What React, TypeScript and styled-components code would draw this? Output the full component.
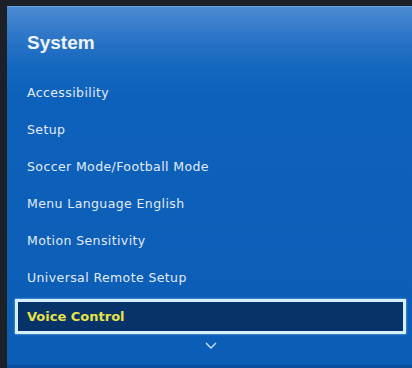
import React from 'react';
import styled, { createGlobalStyle } from 'styled-components';

const GlobalStyle = createGlobalStyle`
  html, body {
    margin: 0;
    padding: 0;
    background: #1c2127;
  }
  body {
    width: 412px;
    height: 368px;
    overflow: hidden;
  }
`;

const Frame = styled.div`
  width: 412px;
  height: 368px;
  padding: 6px 0 0 7px;
  box-sizing: border-box;
  background: #1c2127;
`;

const Panel = styled.div`
  display: flex;
  flex-direction: column;
  height: 362px;
  box-sizing: border-box;
  padding: 26px 6px 0 8px;
  border-top: 1px solid #6aa2dc;
  border-bottom: 3px solid #0a4f9c;
  background: linear-gradient(
    180deg,
    #4c8bd2 0px,
    #2f76c8 28px,
    #1568c0 58px,
    #0e61ba 90px,
    #0b5db6 100%
  );
`;

const Title = styled.h1`
  margin: -1px 0 20px;
  padding-left: 12px;
  height: 22px;
  line-height: 22px;
  font-family: 'Liberation Sans', Arial, sans-serif;
  font-size: 19px;
  font-weight: 700;
  color: #eef4fb;
`;

const List = styled.ul`
  list-style: none;
  margin: 0;
  padding: 0;
  display: flex;
  flex-direction: column;
`;

const Item = styled.li<{ $selected?: boolean }>`
  display: flex;
  align-items: center;
  box-sizing: border-box;
  height: ${(p) => (p.$selected ? '35px' : '37px')};
  margin-top: ${(p) => (p.$selected ? '3px' : '0')};
  padding-left: ${(p) => (p.$selected ? '9px' : '12px')};
  font-family: 'DejaVu Sans', Verdana, sans-serif;
  font-size: ${(p) => (p.$selected ? '13px' : '12.5px')};
  font-weight: ${(p) => (p.$selected ? 700 : 400)};
  letter-spacing: ${(p) => (p.$selected ? '0' : '0.4px')};
  color: ${(p) => (p.$selected ? '#e6e247' : '#e2ebf6')};
  background: ${(p) => (p.$selected ? '#07336a' : 'transparent')};
  border: ${(p) => (p.$selected ? '3px solid #d6eef8' : 'none')};
  box-shadow: ${(p) => (p.$selected ? '0 0 2px rgba(200, 235, 255, 0.7)' : 'none')};
`;

const More = styled.div`
  display: flex;
  justify-content: center;
  padding-top: 8px;
`;

const items = [
  'Accessibility',
  'Setup',
  'Soccer Mode/Football Mode',
  'Menu Language English',
  'Motion Sensitivity',
  'Universal Remote Setup',
];

const App: React.FC = () => {
  return (
    <>
      <GlobalStyle />
      <Frame>
        <Panel>
          <Title>System</Title>
          <List>
            {items.map((label) => (
              <Item key={label}>{label}</Item>
            ))}
            <Item $selected>Voice Control</Item>
          </List>
          <More>
            <svg width="12" height="7" viewBox="0 0 12 7">
              <path d="M1 1 L6 6 L11 1" fill="none" stroke="#cfe3f6" strokeWidth="1.4" />
            </svg>
          </More>
        </Panel>
      </Frame>
    </>
  );
};

export default App;
